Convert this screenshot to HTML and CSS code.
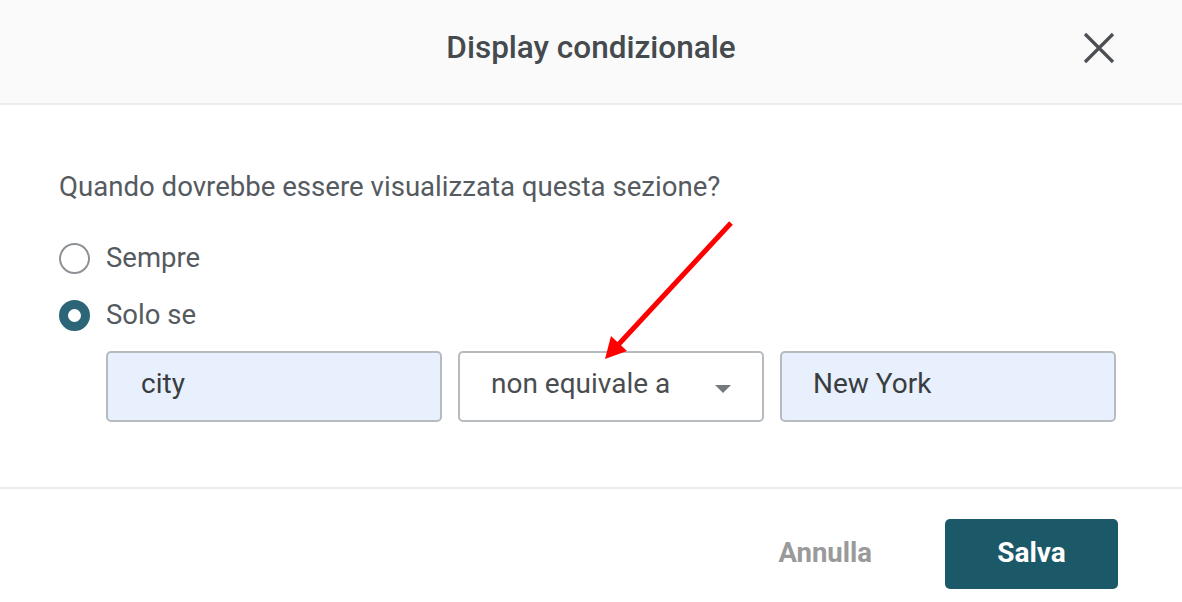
FILE: index.html
```html
<!DOCTYPE html>
<html lang="it">
<head>
<meta charset="utf-8">
<title>Display condizionale</title>
<link rel="stylesheet" href="styles.css">
</head>
<body>
<div class="dialog">
  <header class="dialog-header">
    <h1 class="dialog-title">Display condizionale</h1>
    <button class="close-btn" aria-label="Chiudi">
      <svg width="32" height="32" viewBox="0 0 32 32"><path d="M2 2 L30 30 M30 2 L2 30" stroke="#4a4f55" stroke-width="3.2" stroke-linecap="butt" fill="none"/></svg>
    </button>
  </header>
  <main class="dialog-body">
    <p class="question">Quando dovrebbe essere visualizzata questa sezione?</p>
    <div class="radio-list">
      <label class="radio-row"><span class="radio"></span><span class="radio-label">Sempre</span></label>
      <label class="radio-row"><span class="radio checked"></span><span class="radio-label">Solo se</span></label>
    </div>
    <div class="condition-row">
      <div class="field field-filled field-wide">city</div>
      <div class="field field-select">non equivale a<span class="caret"></span></div>
      <div class="field field-filled field-wide">New York</div>
    </div>
  </main>
  <footer class="dialog-footer">
    <button class="btn-cancel">Annulla</button>
    <button class="btn-save">Salva</button>
  </footer>
  <svg class="annotation" width="1182" height="602" viewBox="0 0 1182 602">
    <line x1="731" y1="223" x2="618" y2="345" stroke="#ff0000" stroke-width="5"/>
    <polygon points="605,359 611,336 627,351" fill="#ff0000"/>
  </svg>
</div>
</body>
</html>
```
FILE: styles.css
```css
* { box-sizing: border-box; }
html, body { margin: 0; padding: 0; background: #fff; }
body { font-family: Roboto, "Noto Sans", "Liberation Sans", sans-serif; }

.dialog { position: relative; width: 1182px; height: 602px; overflow: hidden; }

.dialog-header {
  height: 105px;
  background: #fafafa;
  border-bottom: 2px solid #ececec;
  display: flex;
  align-items: center;
  justify-content: center;
  position: relative;
}
.dialog-title {
  margin: 0 0 9px 0;
  font-size: 31.5px;
  font-weight: 500;
  color: #454a4f;
  letter-spacing: 0;
}
.close-btn {
  position: absolute;
  right: 67px;
  top: 32px;
  width: 32px;
  height: 32px;
  padding: 0;
  border: 0;
  background: transparent;
  display: flex;
}

.dialog-body {
  padding: 64px 0 65px 59px;
  border-bottom: 2px solid #ebebeb;
}
.question {
  margin: 0;
  height: 36px;
  line-height: 36px;
  font-size: 27.6px;
  color: #555a5f;
}
.radio-list {
  margin-top: 31px;
  display: flex;
  flex-direction: column;
  gap: 13px;
}
.radio-row {
  height: 44px;
  display: flex;
  align-items: center;
  gap: 16px;
}
.radio {
  width: 31px;
  height: 31px;
  border-radius: 50%;
  border: 2px solid #8d9196;
  background: #fff;
  flex: none;
}
.radio.checked {
  border: 9.5px solid #2c6577;
}
.radio-label {
  font-size: 27.5px;
  color: #555a5f;
  padding-bottom: 2px;
}

.condition-row {
  margin-top: 14px;
  padding-left: 47px;
  display: flex;
  gap: 16px;
}
.field {
  height: 71px;
  border: 2px solid #b6bbc0;
  border-radius: 5px;
  display: flex;
  align-items: center;
  padding-left: 31px;
  font-size: 28px;
  color: #3a3d40;
  padding-bottom: 6px;
}
.field-filled { background: #e8f0fd; }
.field-wide { width: 336px; }
.field-filled:first-child { padding-left: 33px; }
.field-select {
  width: 306px;
  background: #fff;
  color: #4a4d50;
  position: relative;
}
.caret {
  position: absolute;
  right: 31px;
  top: 32px;
  width: 0;
  height: 0;
  border-left: 8px solid transparent;
  border-right: 8px solid transparent;
  border-top: 8px solid #76797c;
}

.dialog-footer {
  padding: 30px 64px 0 0;
  display: flex;
  justify-content: flex-end;
  align-items: center;
  gap: 73px;
}
.btn-cancel {
  border: 0;
  background: transparent;
  padding: 0 0 4px 0;
  font-family: inherit;
  font-size: 27.5px;
  font-weight: 700;
  color: #9a9a9a;
}
.btn-save {
  width: 173px;
  height: 70px;
  border: 0;
  border-radius: 5px;
  background: #1c5968;
  color: #fff;
  font-family: inherit;
  font-size: 28px;
  font-weight: 700;
  padding-bottom: 4px;
}

.annotation { position: absolute; left: 0; top: 0; pointer-events: none; }
```
